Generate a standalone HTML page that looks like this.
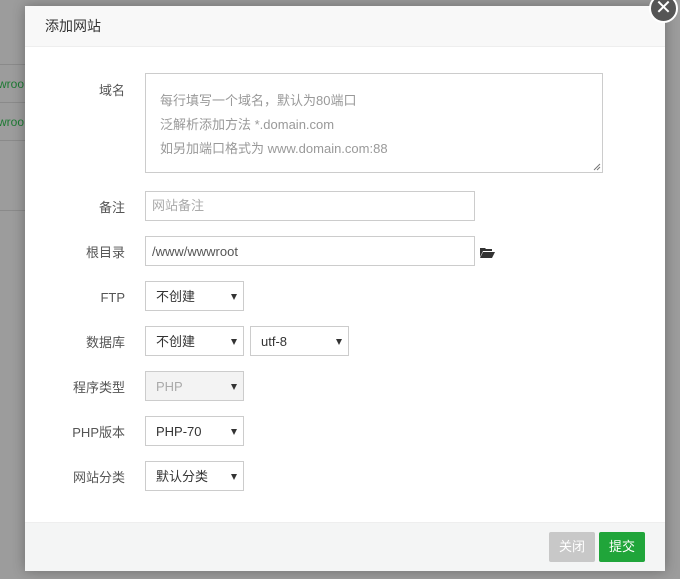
<!DOCTYPE html>
<html><head><meta charset="utf-8"><style>
*{box-sizing:border-box;margin:0;padding:0}
body{width:680px;height:579px;overflow:hidden;background:#9c9c9c;font-family:"Liberation Sans","Noto Sans CJK SC",sans-serif;font-size:12px;color:#333;position:relative}
.bgl{position:absolute;left:0;width:25px;height:1px;background:#8a8a8a}
.dlg{position:absolute;left:25px;top:6px;width:640px;height:565px;background:#fff;box-shadow:0 0 12px rgba(0,0,0,.3)}
.hd{height:41px;background:#f8f8f8;border-bottom:1px solid #eee;padding-left:20px;line-height:41px;font-size:14px;color:#333}
.ft{position:absolute;left:0;right:0;bottom:0;height:49px;background:#f4f5f5;border-top:1px solid #eee}
.btn{position:absolute;top:9px;width:46px;height:30px;border-radius:2px;color:#fff;font-size:13px;line-height:30px;text-align:center}
.lb{position:absolute;width:100px;text-align:right;font-size:13px;color:#555;height:30px;line-height:30px;margin-top:2px}
.in{position:absolute;border:1px solid #ccc;background:#fff;font-size:13px;color:#555;padding-left:6px}
.sel{position:absolute;border:1px solid #ccc;background:#fff;font-size:13px;color:#333;padding-left:10px;width:99px;height:30px;line-height:29px}
.sel:after{content:"";position:absolute;right:6px;top:12px;border-left:3.5px solid transparent;border-right:3.5px solid transparent;border-top:6px solid #333}
</style></head><body>
<div class="bgl" style="top:64px"></div><div class="bgl" style="top:102px"></div><div class="bgl" style="top:140px"></div><div class="bgl" style="top:210px"></div>
<div style="position:absolute;left:-2px;top:77px;color:#1d7a33;font-size:12px">wroo</div>
<div style="position:absolute;left:-2px;top:115px;color:#1d7a33;font-size:12px">wroo</div>
<div class="dlg">
<div class="hd">添加网站</div>
<div class="lb" style="left:0;top:68px">域名</div>
<div class="in" style="left:120px;top:67px;width:458px;height:100px;padding:15px 14px;line-height:24px;color:#999">每行填写一个域名，默认为80端口<br>泛解析添加方法 *.domain.com<br>如另加端口格式为 www.domain.com:88
<svg style="position:absolute;right:1px;bottom:1px" width="8" height="8"><path d="M1 7L7 1M4 7L7 4" stroke="#777" stroke-width="1"/></svg></div>
<div class="lb" style="left:0;top:185px">备注</div>
<div class="in" style="left:120px;top:185px;width:330px;height:30px;line-height:28px;color:#aaa">网站备注</div>
<div class="lb" style="left:0;top:230px">根目录</div>
<div class="in" style="left:120px;top:230px;width:330px;height:30px;line-height:29px">/www/wwwroot</div>
<svg style="position:absolute;left:455px;top:241px" width="15" height="11" viewBox="0 0 15 11"><path d="M0 1h5l1 1h6v2H3L0 10z" fill="#333"/><path d="M3 5h12l-3 6H0z" fill="#333"/></svg>
<div class="lb" style="left:0;top:275px">FTP</div>
<div class="sel" style="left:120px;top:275px">不创建</div>
<div class="lb" style="left:0;top:320px">数据库</div>
<div class="sel" style="left:120px;top:320px">不创建</div>
<div class="sel" style="left:225px;top:320px">utf-8</div>
<div class="lb" style="left:0;top:365px">程序类型</div>
<div class="sel" style="left:120px;top:365px;background:#f3f3f3;color:#aaa">PHP</div>
<div class="lb" style="left:0;top:410px">PHP版本</div>
<div class="sel" style="left:120px;top:410px">PHP-70</div>
<div class="lb" style="left:0;top:455px">网站分类</div>
<div class="sel" style="left:120px;top:455px">默认分类</div>
<div class="ft">
<div class="btn" style="left:524px;background:#c8c8c8">关闭</div>
<div class="btn" style="left:574px;background:#20a53a">提交</div>
</div>
</div>
<div style="position:absolute;left:649px;top:-6px;width:29px;height:29px;border-radius:50%;background:#555;border:2px solid #fff;color:#fff;text-align:center;line-height:24px;font-size:20px">✕</div>
</body></html>
